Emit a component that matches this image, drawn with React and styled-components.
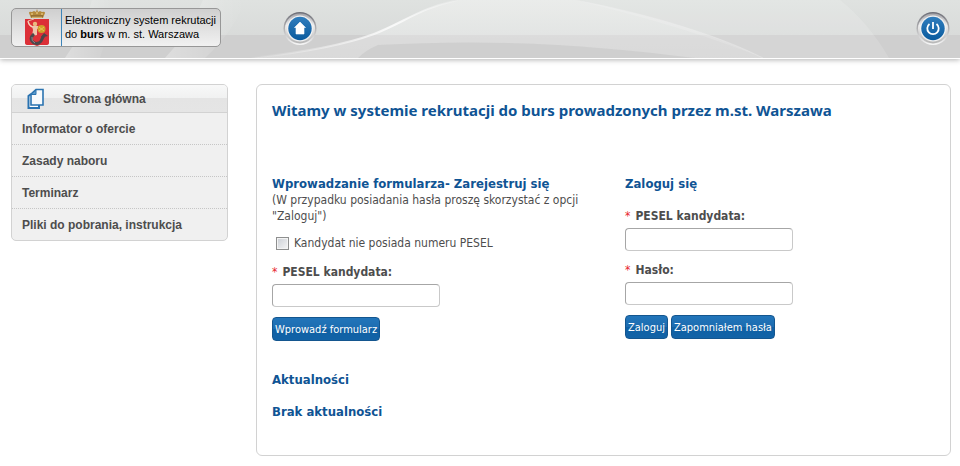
import React, { useState } from 'react';
import styled, { createGlobalStyle } from 'styled-components';

const GlobalStyle = createGlobalStyle`
  * {
    box-sizing: border-box;
  }

  body {
    margin: 0;
    background: #fff;
    color: #4d4d4d;
    font-family: 'DejaVu Sans Condensed', 'Noto Sans', sans-serif;
    font-size: 12px;
    line-height: 16px;
  }
`;

const Header = styled.header`
  display: grid;
  border-bottom: 1px solid #fff;
  box-shadow: 0 1px 5px rgba(0, 0, 0, 0.3);

  & > * {
    grid-area: 1 / 1;
  }
`;

const HeaderWaves = styled.svg`
  display: block;
  width: 100%;
  height: 58px;
`;

const HeaderBar = styled.div`
  position: relative;
  display: flex;
  align-items: flex-start;
  padding: 8px 10px 8px 11px;
`;

const Logo = styled.a`
  display: flex;
  width: 210px;
  height: 39px;
  margin-right: 62px;
  border: 1px solid #979797;
  border-radius: 5px;
  background: linear-gradient(#cfcfcf, #f1f1f1);
  color: #000;
  font-family: 'Liberation Sans', Arial, sans-serif;
  font-size: 11px;
  line-height: 14px;
  text-decoration: none;
  white-space: nowrap;
  overflow: hidden;
`;

const LogoCrest = styled.span`
  flex: 0 0 50px;
  padding-left: 12px;
  border-right: 1px solid #3d84b8;

  & svg {
    display: block;
  }
`;

const LogoText = styled.span`
  padding: 4px 0 0 3px;
`;

const RoundLink = styled.a`
  width: 34px;
  height: 38px;
  padding-top: 3px;
  margin-left: ${props => (props.$end ? 'auto' : '0')};

  & svg {
    display: block;
  }
`;

const Page = styled.div`
  display: flex;
  align-items: flex-start;
  gap: 28px;
  padding: 25px 9px 10px 11px;
`;

const Menu = styled.nav`
  flex: 0 0 217px;
  border: 1px solid #d2d2d2;
  border-radius: 5px;
  background: #f0f0f0;
  overflow: hidden;
`;

const MenuLink = styled.a`
  display: flex;
  align-items: center;
  height: 32px;
  padding: 0 10px;
  border-bottom: 1px dotted #c6c6c6;
  color: #4d4d4d;
  font-family: 'Liberation Sans', Arial, sans-serif;
  font-weight: bold;
  text-decoration: none;

  &:last-child {
    height: 31px;
    border-bottom: 0;
  }
`;

const MenuHome = styled(MenuLink)`
  gap: 17px;
  height: 28px;
  padding: 0 14px;
  border-bottom: 1px solid #d2d2d2;
  background: linear-gradient(#f8f8f8, #f0f1f1 50%, #e4e4e4 50%, #e5e5e5);
`;

const Content = styled.main`
  flex: 1;
  min-width: 0;
  padding: 15px 15px 35px;
  border: 1px solid #d2d2d2;
  border-radius: 6px;
`;

const Title = styled.h1`
  margin: 0 0 56px;
  color: #0f5494;
  font-family: 'Noto Sans', sans-serif;
  font-size: 15px;
  line-height: 20px;
`;

const Heading = styled.h2`
  margin: 0;
  color: #0f5494;
  font-size: 13px;
  line-height: 16px;
`;

const Columns = styled.div`
  display: grid;
  grid-template-columns: 1fr 1fr;
  gap: 43px;
`;

const Hint = styled.p`
  margin: 0;
`;

const CheckRow = styled.label`
  display: flex;
  align-items: center;
  gap: 5px;
  margin: 11px 0 0 4px;
`;

const Checkbox = styled.input`
  appearance: none;
  width: 13px;
  height: 13px;
  margin: 0;
  border: 1px solid #8e8f8f;
  background: linear-gradient(135deg, #cbcfd5, #f6f6f6);
  box-shadow: inset 0 0 0 1px #f4f4f4;

  &:checked {
    background: #1b6cb0;
  }
`;

const Fields = styled.div`
  display: flex;
  flex-direction: column;
  gap: 11px;
  margin-top: ${props => props.$top}px;
`;

const FieldBox = styled.div`
  display: flex;
  flex-direction: column;
  align-items: flex-start;
  gap: 4px;
`;

const FieldLabel = styled.label`
  font-weight: bold;
`;

const Required = styled.span`
  margin-right: 5px;
  color: #e8262d;
  font-weight: normal;
`;

const TextInput = styled.input`
  width: 168px;
  height: 23px;
  padding: 0 4px;
  border: 1px solid #c9c9c9;
  border-top-color: #a6a6a6;
  border-left-color: #a6a6a6;
  border-radius: 4px;
  background: #fff;
  font: inherit;
`;

const Actions = styled.div`
  display: flex;
  gap: 3px;
  margin-top: 10px;
`;

const Button = styled.button`
  height: 24px;
  padding: 0 2px;
  border: 1px solid #14568f;
  border-radius: 4px;
  background: linear-gradient(#2275ba, #1c6cb0 50%, #0f60a4 50%, #1263a7);
  color: #fff;
  font-family: inherit;
  font-size: 11px;
  white-space: nowrap;
  cursor: pointer;
`;

const News = styled.section`
  display: flex;
  flex-direction: column;
  gap: 16px;
  margin-top: 31px;
`;

const Waves = () => (
  <HeaderWaves viewBox="0 0 960 58" preserveAspectRatio="none" aria-hidden="true">
    <defs>
      <linearGradient id="top" x1="0" y1="0" x2="0" y2="1">
        <stop offset="0" stopColor="#dfe2e0" />
        <stop offset="1" stopColor="#d9dbda" />
      </linearGradient>
      <linearGradient id="hill" x1="0" y1="0" x2="0" y2="1">
        <stop offset="0" stopColor="#fff" stopOpacity="0.34" />
        <stop offset="1" stopColor="#fff" stopOpacity="0.22" />
      </linearGradient>
      <linearGradient id="streak" x1="0" y1="0" x2="1" y2="0">
        <stop offset="0" stopColor="#fff" stopOpacity="0.3" />
        <stop offset="1" stopColor="#fff" stopOpacity="0" />
      </linearGradient>
      <linearGradient id="ridge" gradientUnits="userSpaceOnUse" x1="250" y1="0" x2="458" y2="0">
        <stop offset="0" stopColor="#fff" stopOpacity="0" />
        <stop offset="0.7" stopColor="#fff" stopOpacity="0.8" />
        <stop offset="1" stopColor="#fff" stopOpacity="0.1" />
      </linearGradient>
    </defs>
    <rect width="960" height="58" fill="#cfcfcf" />
    <rect width="960" height="35" fill="url(#top)" />
    <path d="M92 0 Q84 32 65 58 H100 Q110 30 112 0Z" fill="url(#streak)" />
    <path d="M203 0 Q190 32 165 58 H205 Q235 30 245 0Z" fill="url(#streak)" />
    <path d="M575 0 Q690 28 763 58 H889 Q868 22 840 0Z" fill="#fff" opacity="0.14" />
    <path d="M250 58 Q330 50 374 34 C405 22 420 8 458 0 H575 C650 14 720 36 763 58Z" fill="url(#hill)" />
    <path d="M250 58 Q330 50 374 34 C405 22 420 8 458 0" fill="none" stroke="url(#ridge)" strokeWidth="2" />
    <path d="M575 0 C650 14 720 36 763 58" fill="none" stroke="#eee" strokeWidth="1" opacity="0.4" />
    <path d="M358 58 Q366 50 378 45 C500 38 600 46 695 58Z" fill="#cdcdcd" opacity="0.85" />
  </HeaderWaves>
);

const Crest = () => (
  <svg width="26" height="37" viewBox="0 0 26 37" aria-hidden="true">
    <path d="M1 10 H25 V34 Q25 36 22 36 H16 L13 37 L10 36 H4 Q1 36 1 34Z" fill="#dc3038" />
    <path d="M7 9 L5 4 Q5 2 8 3 L10 2 L12 3 L13 0 L14 3 L16 2 L18 3 Q21 2 21 4 L19 9Z" fill="#b58a3b" />
    <path d="M7 5 H9 M12 4 H14 M17 5 H19 M8 8 H18" stroke="#f2d891" strokeWidth="1" />
    <path d="M7 7 H19" stroke="#775429" strokeWidth="1" />
    <path d="M4 12 Q5 17 9 18" stroke="#f6d4bb" strokeWidth="1.4" fill="none" />
    <path d="M4 12 L10 10" stroke="#e7b7a5" strokeWidth="1" />
    <circle cx="11" cy="15" r="2.2" fill="#eaba80" />
    <path d="M8 17 L14 17 L17 20 L13 20 L13 26 L8 27 L9 21Z" fill="#edc5ad" />
    <circle cx="17.500" cy="20" r="4" fill="#cfa02a" />
    <path d="M15 18 L20 22 M20 18 L15 22" stroke="#ecd15a" strokeWidth="0.8" />
    <path d="M10 25 C4 30 9 36 15 34 C19 32 17 29 20 27" fill="none" stroke="#4c474b" strokeWidth="3" />
    <path d="M17 28 L20 24 L24 27 L20 28Z" fill="#4c474b" />
    <path d="M8 28 Q7 32 11 34" stroke="#8b878b" strokeWidth="1" fill="none" />
  </svg>
);

const RoundIcon = ({ id, children }) => (
  <svg width="34" height="35" viewBox="0 0 34 35" aria-hidden="true">
    <defs>
      <linearGradient id={`${id}-rim`} x1="0" y1="0" x2="0" y2="1">
        <stop offset="0" stopColor="#6c6d76" />
        <stop offset="0.5" stopColor="#b2b2b4" />
        <stop offset="1" stopColor="#f8f8f8" />
      </linearGradient>
      <linearGradient id={`${id}-ring`} x1="0" y1="0" x2="0" y2="1">
        <stop offset="0" stopColor="#a4a4aa" />
        <stop offset="0.4" stopColor="#efefef" />
        <stop offset="1" stopColor="#b5b5b5" />
      </linearGradient>
      <linearGradient id={`${id}-face`} x1="0" y1="0" x2="0" y2="1">
        <stop offset="0" stopColor="#2f7dbd" />
        <stop offset="1" stopColor="#0b5b9e" />
      </linearGradient>
    </defs>
    <circle cx="17" cy="17.500" r="16.500" fill={`url(#${id}-rim)`} />
    <circle cx="17" cy="17.500" r="15" fill={`url(#${id}-ring)`} />
    <circle cx="17" cy="17.500" r="13" fill="#f1f1f1" />
    <circle cx="17" cy="17.500" r="11.700" fill={`url(#${id}-face)`} />
    {children}
  </svg>
);

const PagesIcon = () => (
  <svg width="20" height="22" viewBox="0 0 20 22" aria-hidden="true">
    <path d="M5 6 L2.500 8 V20 H13 V17" fill="#fff" stroke="#2a73b0" strokeWidth="2" />
    <path d="M5 6 L10 1.500 H17 V17 H5Z" fill="#f7fafc" stroke="#2a73b0" strokeWidth="1.600" />
    <path d="M5 6.500 H10 V2Z" fill="#5b9bcc" stroke="#2a73b0" strokeWidth="1" />
  </svg>
);

const Field = ({ id, label, type = 'text' }) => (
  <FieldBox>
    <FieldLabel htmlFor={id}>
      <Required>*</Required>
      {label}
    </FieldLabel>
    <TextInput id={id} type={type} />
  </FieldBox>
);

const menuItems = ['Informator o ofercie', 'Zasady naboru', 'Terminarz', 'Pliki do pobrania, instrukcja'];

const App = () => {
  const [noPesel, setNoPesel] = useState(false);

  return (
    <>
      <GlobalStyle />
      <Header>
        <Waves />
        <HeaderBar>
          <Logo href="#">
            <LogoCrest>
              <Crest />
            </LogoCrest>
            <LogoText>
              Elektroniczny system rekrutacji
              <br />
              do <b>burs</b> w m. st. Warszawa
            </LogoText>
          </Logo>
          <RoundLink href="#" aria-label="Strona główna">
            <RoundIcon id="home">
              <path d="M17 11 L22.500 16.500 H21 V23 H13 V16.500 H11.500Z" fill="#fff" stroke="#fff" strokeWidth="0.6" />
            </RoundIcon>
          </RoundLink>
          <RoundLink href="#" aria-label="Wyloguj" $end>
            <RoundIcon id="power">
              <path d="M13.500 13 A5.700 5.700 0 1 0 20.500 13" fill="none" stroke="#fff" strokeWidth="1.800" />
              <path d="M17 11 V18" stroke="#fff" strokeWidth="1.800" />
            </RoundIcon>
          </RoundLink>
        </HeaderBar>
      </Header>

      <Page>
        <Menu>
          <MenuHome href="#">
            <PagesIcon />
            Strona główna
          </MenuHome>
          {menuItems.map(item => (
            <MenuLink href="#" key={item}>{item}</MenuLink>
          ))}
        </Menu>

        <Content>
          <Title>Witamy w systemie rekrutacji do burs prowadzonych przez m.st. Warszawa</Title>
          <Columns>
            <form>
              <Heading>Wprowadzanie formularza- Zarejestruj się</Heading>
              <Hint>(W przypadku posiadania hasła proszę skorzystać z opcji "Zaloguj")</Hint>
              <CheckRow>
                <Checkbox type="checkbox" checked={noPesel} onChange={e => setNoPesel(e.target.checked)} />
                Kandydat nie posiada numeru PESEL
              </CheckRow>
              <Fields $top={13}>
                <Field id="register-pesel" label="PESEL kandydata:" />
              </Fields>
              <Actions>
                <Button type="button">Wprowadź formularz</Button>
              </Actions>
            </form>

            <form>
              <Heading>Zaloguj się</Heading>
              <Fields $top={16}>
                <Field id="login-pesel" label="PESEL kandydata:" />
                <Field id="login-password" label="Hasło:" type="password" />
              </Fields>
              <Actions>
                <Button type="button">Zaloguj</Button>
                <Button type="button">Zapomniałem hasła</Button>
              </Actions>
            </form>
          </Columns>
          <News>
            <Heading>Aktualności</Heading>
            <Heading>Brak aktualności</Heading>
          </News>
        </Content>
      </Page>
    </>
  );
};

export default App;
